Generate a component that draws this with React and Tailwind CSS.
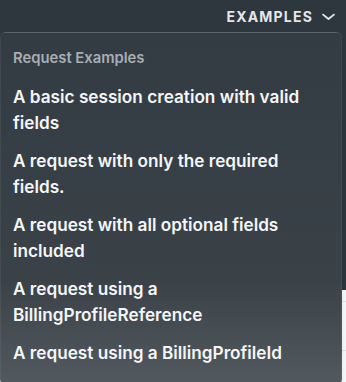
import React from 'react';

const examples = [
  'A basic session creation with valid fields',
  'A request with only the required fields.',
  'A request with all optional fields included',
  'A request using a BillingProfileReference',
  'A request using a BillingProfileId',
];

function Chevron() {
  return (
    <svg width="13" height="13" viewBox="0 0 24 24" fill="none" stroke="currentColor" strokeWidth="3.4" strokeLinecap="round" strokeLinejoin="round">
      <path d="M2 8.5l10 8 10-8" />
    </svg>
  );
}

export default function App() {
  return (
    <div className="relative w-[346px] h-[382px] overflow-hidden bg-[#2e373e] font-['Inter',sans-serif]">
      {/* page behind the menu */}
      <div className="flex h-[32px] items-center justify-end gap-[9px] pr-[11px] text-[#e4e7ea]">
        <span className="text-[14px] font-bold tracking-[0.085em]">EXAMPLES</span>
        <Chevron />
      </div>
      <div className="h-[258px]" />
      <div className="h-[92px] bg-[#f8f9fa]">
        <div className="h-[12px] border-b border-[#dfe2e5]" />
        <div className="h-[49px] border-b border-[#dfe2e5]" />
      </div>

      {/* dropdown */}
      <div className="absolute left-0 top-[32px] w-[342px] rounded-[6px] border border-white/[0.06] bg-gradient-to-b from-[#333c43] via-[#3a4248] via-70% to-[#52595f] pb-[12px] pt-[12px] shadow-lg">
        <div className="px-[12px] pb-[7px] text-[14.8px] font-semibold leading-[26px] text-[#a7aeb4]">Request Examples</div>
        {examples.map((e) => (
          <div key={e} className="px-[12px] py-[6px] text-[17.2px] font-semibold leading-[26px] text-[#f5f6f7]">
            {e}
          </div>
        ))}
      </div>
    </div>
  );
}
